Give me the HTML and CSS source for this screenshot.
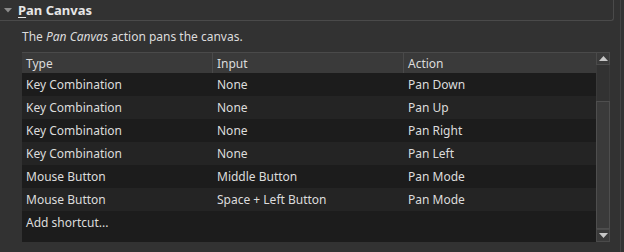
FILE: index.html
```html
<!DOCTYPE html>
<html>
<head>
<meta charset="utf-8">
<link rel="stylesheet" href="styles.css">
</head>
<body>
<div class="page">
  <div class="main">
    <div class="group-head">
      <svg class="arrow" width="8" height="5" viewBox="0 0 8 5"><path d="M0 0 H8 L4 4.5 Z" fill="#8c8c8c"/></svg>
      <span class="title"><span class="mn">P</span>an Canvas</span>
    </div>
    <div class="desc">The <i>Pan Canvas</i> action pans the canvas.</div>
    <div class="tablewrap">
      <div class="table">
        <div class="row head">
          <div class="cell">Type</div>
          <div class="cell">Input</div>
          <div class="cell">Action</div>
        </div>
        <div class="row odd"><div class="cell">Key Combination</div><div class="cell">None</div><div class="cell">Pan Down</div></div>
        <div class="row even"><div class="cell">Key Combination</div><div class="cell">None</div><div class="cell">Pan Up</div></div>
        <div class="row odd"><div class="cell">Key Combination</div><div class="cell">None</div><div class="cell">Pan Right</div></div>
        <div class="row even"><div class="cell">Key Combination</div><div class="cell">None</div><div class="cell">Pan Left</div></div>
        <div class="row odd"><div class="cell">Mouse Button</div><div class="cell">Middle Button</div><div class="cell">Pan Mode</div></div>
        <div class="row even"><div class="cell">Mouse Button</div><div class="cell">Space + Left Button</div><div class="cell">Pan Mode</div></div>
        <div class="row odd"><div class="cell">Add shortcut...</div><div class="cell"></div><div class="cell"></div></div>
      </div>
      <div class="scrollbar">
        <div class="sbtn"><svg width="9" height="5" viewBox="0 0 9 5"><path d="M0 5 L4.5 0 L9 5 Z" fill="#c8c8c8"/></svg></div>
        <div class="track"><div class="handle"></div></div>
        <div class="sbtn"><svg width="9" height="5" viewBox="0 0 9 5"><path d="M0 0 L4.5 5 L9 0 Z" fill="#c8c8c8"/></svg></div>
      </div>
    </div>
  </div>
  <div class="edge"></div>
</div>
</body>
</html>
```

FILE: styles.css
```css
html, body {
  margin: 0;
  padding: 0;
  background: #323232;
}
body {
  width: 624px;
  height: 252px;
  overflow: hidden;
  font-family: "Noto Sans", "Open Sans", sans-serif;
  font-size: 12px;
  color: #dcdcdc;
}
.page {
  display: flex;
  height: 252px;
}
.main {
  width: 620px;
  display: flex;
  flex-direction: column;
}
.edge {
  width: 1px;
  background: #434343;
  height: 252px;
}
.group-head {
  width: 609px;
  height: 20px;
  border-bottom: 1px solid #4a4a4a;
  border-right: 1px solid #4a4a4a;
  border-bottom-right-radius: 3px;
  display: flex;
  align-items: center;
  gap: 6px;
  padding-left: 4px;
  box-sizing: content-box;
}
.title {
  font-weight: bold;
  font-size: 13px;
  color: #e6e6e6;
}
.mn {
  text-decoration: underline;
  text-underline-offset: 2px;
}
.desc {
  margin-left: 22px;
  margin-top: 7px;
  height: 17px;
  line-height: 17px;
}
.tablewrap {
  margin-left: 22px;
  margin-top: 7px;
  width: 588px;
  height: 190px;
  display: flex;
  background: #1c1c1c;
}
.table {
  width: 574px;
  display: flex;
  flex-direction: column;
}
.row {
  display: grid;
  grid-template-columns: 191px 191px 192px;
  height: 23px;
  align-items: center;
}
.row.head {
  height: 21px;
  background: #3a3a3a;
  border-top: 1px solid #4a4a4a;
  box-sizing: border-box;
  align-items: stretch;
}
.row.head .cell {
  display: flex;
  align-items: center;
  border-right: 1px solid #4a4a4a;
}
.row.head .cell:last-child {
  border-right: none;
}
.cell {
  padding-left: 4px;
  white-space: nowrap;
}
.row.odd { background: #1c1c1c; }
.row.even { background: #242424; }
.scrollbar {
  width: 14px;
  display: flex;
  flex-direction: column;
  background: #323232;
}
.sbtn {
  height: 13px;
  box-sizing: border-box;
  border: 1px solid #4a4a4a;
  background: #3a3a3a;
  display: flex;
  align-items: center;
  justify-content: center;
}
.track {
  flex: 1;
  display: flex;
  flex-direction: column;
  justify-content: flex-end;
  border-left: 1px solid #3a3a3a;
  border-right: 1px solid #3a3a3a;
}
.handle {
  height: 126px;
  margin: 0 -1px;
  border: 1px solid #4e4e4e;
  background: #3a3a3a;
}
```
